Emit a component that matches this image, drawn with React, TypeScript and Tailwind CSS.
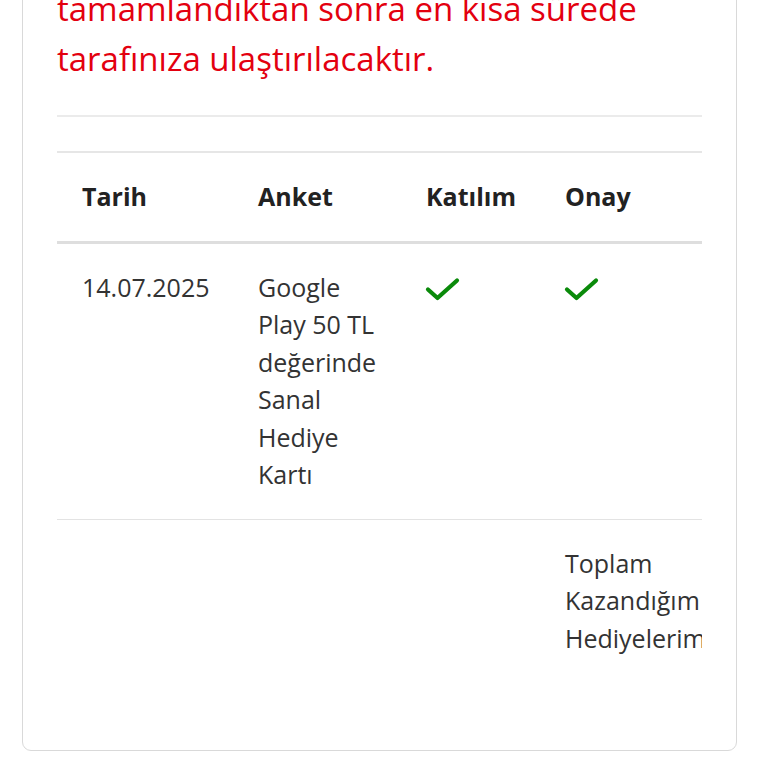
import React from 'react'

const font = { fontFamily: '"Open Sans", "Noto Sans", sans-serif' }

function Check() {
  return (
    <svg width="35" height="25" viewBox="0 0 35 25" className="inline-block align-middle -ml-[1px]">
      <path d="M3 12.5 L12.5 21 L32 3.5" fill="none" stroke="#0a8a0a" strokeWidth="4.2" strokeLinecap="round" strokeLinejoin="round" />
    </svg>
  )
}

const th = 'text-left align-top font-bold text-[#222] px-[25px] py-[25px]'
const td = 'align-top text-[#333] px-[25px] py-[25px]'

export default function App() {
  return (
    <div className="w-[768px] h-[768px] overflow-hidden bg-white" style={font}>
      <div className="-mt-[10px] ml-[22px] w-[715px] border border-[#d9d9d9] rounded-[9px] bg-white px-[34px] pb-[36px] overflow-hidden">
        <p className="-mt-[7px] text-[33px] leading-[50px] text-[#e3000f]">
          tamamlandıktan sonra en kısa sürede
          <br />
          tarafınıza ulaştırılacaktır.
        </p>
        <div className="mt-[31px] h-[2px] bg-[#ebebeb]" />
        <div className="mt-[34px] mb-[32px] overflow-hidden">
          <table className="table-fixed border-collapse w-[700px] text-[25px] leading-[37.5px]">
            <colgroup>
              <col className="w-[176px]" />
              <col className="w-[168px]" />
              <col className="w-[139px]" />
              <col className="w-[217px]" />
            </colgroup>
            <thead>
              <tr className="border-t-2 border-t-[#e6e6e6] border-b-[3px] border-b-[#dedede]">
                <th className={th}>Tarih</th>
                <th className={th}>Anket</th>
                <th className={th}>Katılım</th>
                <th className={th}>Onay</th>
              </tr>
            </thead>
            <tbody>
              <tr className="border-b-[1.5px] border-b-[#e3e3e3]">
                <td className={td}>14.07.2025</td>
                <td className={td}>
                  Google
                  <br />
                  Play 50 TL
                  <br />
                  değerinde
                  <br />
                  Sanal
                  <br />
                  Hediye
                  <br />
                  Kartı
                </td>
                <td className={td}>
                  <Check />
                </td>
                <td className={td}>
                  <Check />
                </td>
              </tr>
              <tr>
                <td className={td}></td>
                <td className={td}></td>
                <td className={td}></td>
                <td className={td}>
                  Toplam
                  <br />
                  Kazandığım
                  <br />
                  Hediyelerim
                </td>
              </tr>
            </tbody>
          </table>
        </div>
      </div>
    </div>
  )
}
